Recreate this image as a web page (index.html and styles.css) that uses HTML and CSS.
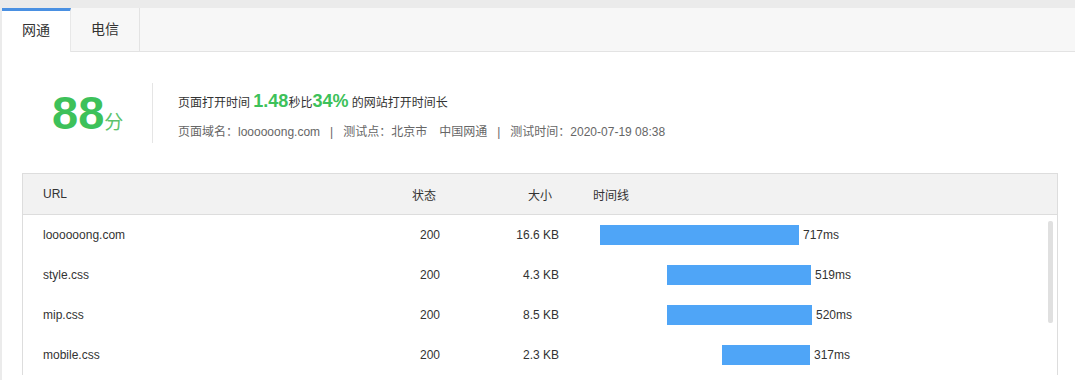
FILE: index.html
```html
<!DOCTYPE html>
<html lang="zh-CN">
  <head>
    <meta charset="UTF-8" />
    <title>网站测速</title>
    <link rel="stylesheet" href="styles.css">
  </head>
  <body>
    <div class="panel">
      <div class="tabs">
        <div class="tab active">网通</div>
        <div class="tab">电信</div>
      </div>

      <div class="summary">
        <div class="score">88<span class="unit">分</span></div>
        <div class="info">
          <div class="line1">
            页面打开时间 <b class="num">1.48</b>秒比<b class="num">34%</b> 的网站打开时间长
          </div>
          <div class="line2">
            页面域名：loooooong.com<span class="sep">|</span>测试点：北京市<span class="gap"></span>中国网通<span class="sep">|</span>测试时间：2020-07-19 08:38
          </div>
        </div>
      </div>

      <div class="table">
        <div class="row head">
          <div class="c-url">URL</div>
          <div class="c-status">状态</div>
          <div class="c-size">大小</div>
          <div class="c-time">时间线</div>
        </div>
        <div class="body">
          <div class="row">
            <div class="c-url">loooooong.com</div>
            <div class="c-status">200</div>
            <div class="c-size">16.6 KB</div>
            <div class="c-time"><span class="bar" style="margin-left:0;width:199px"></span><span class="ms">717ms</span></div>
          </div>
          <div class="row">
            <div class="c-url">style.css</div>
            <div class="c-status">200</div>
            <div class="c-size">4.3 KB</div>
            <div class="c-time"><span class="bar" style="margin-left:67px;width:144px"></span><span class="ms">519ms</span></div>
          </div>
          <div class="row">
            <div class="c-url">mip.css</div>
            <div class="c-status">200</div>
            <div class="c-size">8.5 KB</div>
            <div class="c-time"><span class="bar" style="margin-left:67px;width:145px"></span><span class="ms">520ms</span></div>
          </div>
          <div class="row">
            <div class="c-url">mobile.css</div>
            <div class="c-status">200</div>
            <div class="c-size">2.3 KB</div>
            <div class="c-time"><span class="bar" style="margin-left:122px;width:88px"></span><span class="ms">317ms</span></div>
          </div>
          <div class="scroll-thumb"></div>
        </div>
      </div>
    </div>
  </body>
</html>
```

FILE: styles.css
```css
body {
  margin: 0;
  height: 380px;
  font-family: 'Liberation Sans', 'Noto Sans CJK SC', sans-serif;
  background-color: #ebebeb;
  color: #333;
  overflow: hidden;
}
.panel {
  margin: 8px 0 0 2px;
  background-color: #fff;
  height: 372px;
  overflow: hidden;
}
.tabs {
  display: flex;
  height: 44px;
  background-color: #f7f7f7;
  border-bottom: 1px solid #e3e3e3;
  box-sizing: border-box;
}
.tab {
  width: 68px;
  border-right: 1px solid #e3e3e3;
  font-size: 14px;
  line-height: 43px;
  text-align: center;
  color: #333;
}
.tab.active {
  background-color: #fff;
  border-top: 3px solid #4a90e2;
  line-height: 38px;
  height: 41px;
  margin-bottom: -1px;
  border-right-color: #e8e8e8;
}
.summary {
  display: flex;
  align-items: flex-start;
  padding: 31px 0 30px;
}
.score {
  width: 100px;
  padding-left: 50px;
  height: 60px;
  line-height: 60px;
  border-right: 1px solid #e5e5e5;
  font-size: 47px;
  font-weight: bold;
  color: #3dc15a;
}
.unit {
  font-size: 19px;
  font-weight: normal;
  color: #5cc36c;
}
.info {
  padding-left: 25px;
  margin-top: 6px;
}
.line1 {
  font-size: 12px;
  line-height: 24px;
}
.num {
  font-size: 18px;
  color: #3dc15a;
}
.line2 {
  margin-top: 7px;
  font-size: 12px;
  line-height: 20px;
  color: #666;
}
.sep {
  margin: 0 10px;
}
.gap {
  display: inline-block;
  width: 12px;
}
.table {
  margin: 0 17px 0 20px;
  border: 1px solid #ddd;
  border-bottom: none;
  font-size: 12px;
}
.row {
  display: grid;
  grid-template-columns: 370px 80px 110px 1fr;
  height: 40px;
  align-items: center;
}
.row.head {
  height: 40px;
  background-color: #f2f2f2;
  border-bottom: 1px solid #ddd;
}
.body {
  position: relative;
}
.c-url {
  padding-left: 20px;
}
.c-status {
  padding-left: 27px;
}
.head .c-status {
  padding-left: 19px;
}
.c-size {
  text-align: right;
  padding-right: 24px;
}
.head .c-size {
  padding-right: 31px;
}
.c-time {
  display: flex;
  align-items: center;
  padding-left: 17px;
}
.head .c-time {
  padding-left: 10px;
}
.bar {
  height: 20px;
  background-color: #4fa5f7;
}
.ms {
  margin-left: 4px;
}
.scroll-thumb {
  position: absolute;
  top: 6px;
  right: 4px;
  width: 5px;
  height: 102px;
  background-color: #e0e0e0;
  border-radius: 2px;
}
```
